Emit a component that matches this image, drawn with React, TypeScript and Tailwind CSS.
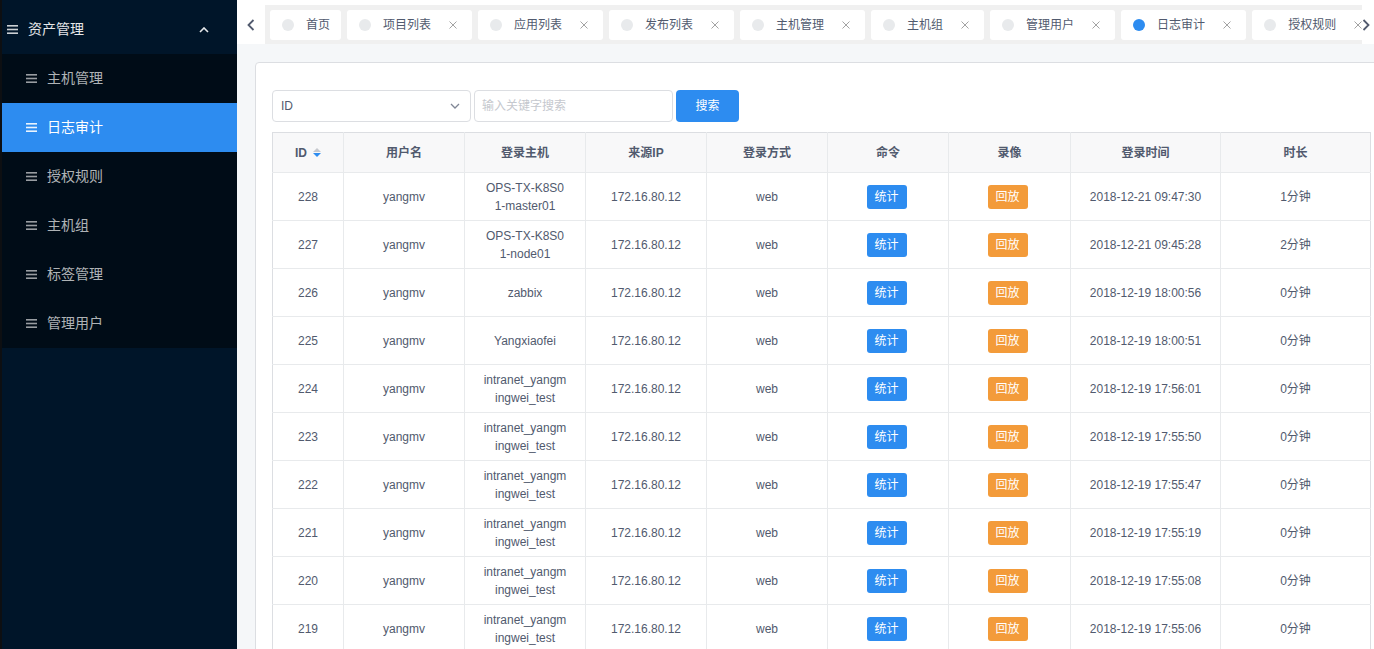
import React from 'react';

const font = { fontFamily: '"Liberation Sans", "Noto Sans CJK SC", sans-serif' };

const menuItems = ['主机管理', '日志审计', '授权规则', '主机组', '标签管理', '管理用户'];

const tabs = [
  { name: '首页', closable: false },
  { name: '项目列表', closable: true },
  { name: '应用列表', closable: true },
  { name: '发布列表', closable: true },
  { name: '主机管理', closable: true },
  { name: '主机组', closable: true },
  { name: '管理用户', closable: true },
  { name: '日志审计', closable: true, active: true },
  { name: '授权规则', closable: true },
];

const rows = [
  { id: 228, host: ['OPS-TX-K8S0', '1-master01'], time: '2018-12-21 09:47:30', dur: '1分钟' },
  { id: 227, host: ['OPS-TX-K8S0', '1-node01'], time: '2018-12-21 09:45:28', dur: '2分钟' },
  { id: 226, host: ['zabbix'], time: '2018-12-19 18:00:56', dur: '0分钟' },
  { id: 225, host: ['Yangxiaofei'], time: '2018-12-19 18:00:51', dur: '0分钟' },
  { id: 224, host: ['intranet_yangm', 'ingwei_test'], time: '2018-12-19 17:56:01', dur: '0分钟' },
  { id: 223, host: ['intranet_yangm', 'ingwei_test'], time: '2018-12-19 17:55:50', dur: '0分钟' },
  { id: 222, host: ['intranet_yangm', 'ingwei_test'], time: '2018-12-19 17:55:47', dur: '0分钟' },
  { id: 221, host: ['intranet_yangm', 'ingwei_test'], time: '2018-12-19 17:55:19', dur: '0分钟' },
  { id: 220, host: ['intranet_yangm', 'ingwei_test'], time: '2018-12-19 17:55:08', dur: '0分钟' },
  { id: 219, host: ['intranet_yangm', 'ingwei_test'], time: '2018-12-19 17:55:06', dur: '0分钟' },
];

const headers = ['用户名', '登录主机', '来源IP', '登录方式', '命令', '录像', '登录时间', '时长'];
const colWidths = [71, 121, 121, 121, 121, 121, 122, 150, 150];

function MenuIcon({ className }: { className?: string }) {
  return (
    <svg width="11" height="9" viewBox="0 0 11 9" className={className} fill="currentColor">
      <rect x="0" y="0" width="11" height="1.6" />
      <rect x="0" y="3.7" width="11" height="1.6" />
      <rect x="0" y="7.4" width="11" height="1.6" />
    </svg>
  );
}

function Sidebar() {
  return (
    <aside className="w-[237px] shrink-0 h-full bg-[#001529] border-l-2 border-[#0d0f12] flex flex-col">
      <div className="h-[54px] flex items-center pt-[5px] pl-[5px] pr-[28px] text-white/90 text-[14px]">
        <MenuIcon className="text-white/80" />
        <span className="ml-[10px]">资产管理</span>
        <svg width="10" height="6" viewBox="0 0 10 6" className="ml-auto text-white/90" fill="none" stroke="currentColor" strokeWidth="1.6">
          <path d="M1 5l4-4 4 4" />
        </svg>
      </div>
      <div className="bg-[#000c17]">
        {menuItems.map((m) => {
          const active = m === '日志审计';
          return (
            <div
              key={m}
              className={`h-[49px] flex items-center pl-[24px] text-[14px] ${active ? 'bg-[#2d8cf0] text-white' : 'text-white/70'}`}
            >
              <MenuIcon className={active ? 'text-white/90' : 'text-white/60'} />
              <span className="ml-[10px]">{m}</span>
            </div>
          );
        })}
      </div>
    </aside>
  );
}

function TabsNav() {
  return (
    <div className="h-[44px] bg-white pt-[5px] shrink-0">
      <div className="h-[39px] bg-[#f0f0f0] flex items-stretch">
        <div className="w-[28px] bg-white flex items-center justify-center text-[#515a6e] shrink-0">
          <svg width="8" height="12" viewBox="0 0 8 12" fill="none" stroke="currentColor" strokeWidth="1.8">
            <path d="M6.5 1L1.5 6l5 5" />
          </svg>
        </div>
        <div className="flex-1 overflow-hidden flex items-center gap-[6px] pl-[5px]">
          {tabs.map((t) => (
            <div
              key={t.name}
              className={`h-[30px] bg-white rounded-[3px] flex items-center pl-[12px] shrink-0 text-[12px] text-[#515a6e] ${t.closable ? 'pr-[15px]' : 'pr-[11px]'}`}
            >
              <span className={`w-[12px] h-[12px] rounded-full ${t.active ? 'bg-[#2d8cf0]' : 'bg-[#e8eaec]'}`} />
              <span className="ml-[12px]">{t.name}</span>
              {t.closable && (
                <svg width="8" height="8" viewBox="0 0 8 8" className="ml-[18px] text-[#999]" stroke="currentColor" strokeWidth="0.9">
                  <path d="M0.5 0.5l7 7M7.5 0.5l-7 7" />
                </svg>
              )}
            </div>
          ))}
        </div>
        <div className="w-[12px] bg-white flex items-center justify-start text-[#515a6e] shrink-0">
          <svg width="8" height="12" viewBox="0 0 8 12" fill="none" stroke="currentColor" strokeWidth="1.8">
            <path d="M1.5 1l5 5-5 5" />
          </svg>
        </div>
      </div>
    </div>
  );
}

function SortIcon() {
  return (
    <span className="inline-flex flex-col ml-[6px] gap-[1px]">
      <svg width="8" height="4" viewBox="0 0 8 4"><path d="M0 4L4 0l4 4z" fill="#c5c8ce" /></svg>
      <svg width="8" height="4" viewBox="0 0 8 4"><path d="M0 0h8L4 4z" fill="#2d8cf0" /></svg>
    </span>
  );
}

function LogTable() {
  return (
    <table className="table-fixed border-collapse border border-[#dcdee2] text-[12px] text-[#515a6e] mt-[10px]" style={{ width: 1098 }}>
      <colgroup>
        {colWidths.map((w, i) => (
          <col key={i} style={{ width: w }} />
        ))}
      </colgroup>
      <thead>
        <tr className="h-[40px] bg-[#f8f8f9]">
          <th className="border-b border-r border-[#e8eaec] font-bold">
            <span className="inline-flex items-center">ID<SortIcon /></span>
          </th>
          {headers.map((h, i) => (
            <th key={h} className={`border-b border-[#e8eaec] font-bold ${i < headers.length - 1 ? 'border-r' : ''}`}>
              {h}
            </th>
          ))}
        </tr>
      </thead>
      <tbody>
        {rows.map((r) => (
          <tr key={r.id} className="h-[48px]">
            <td className="border-b border-r border-[#e8eaec] text-center">{r.id}</td>
            <td className="border-b border-r border-[#e8eaec] text-center">yangmv</td>
            <td className="border-b border-r border-[#e8eaec] text-center leading-[18px]">
              {r.host.map((l) => (
                <div key={l}>{l}</div>
              ))}
            </td>
            <td className="border-b border-r border-[#e8eaec] text-center">172.16.80.12</td>
            <td className="border-b border-r border-[#e8eaec] text-center">web</td>
            <td className="border-b border-r border-[#e8eaec] text-center pr-[3px]">
              <span className="inline-flex items-center justify-center w-[40px] h-[24px] rounded-[3px] bg-[#2d8cf0] text-white text-[12px]">统计</span>
            </td>
            <td className="border-b border-r border-[#e8eaec] text-center pr-[4px]">
              <span className="inline-flex items-center justify-center w-[40px] h-[24px] rounded-[3px] bg-[#f39b3a] text-white text-[12px]">回放</span>
            </td>
            <td className="border-b border-r border-[#e8eaec] text-center">{r.time}</td>
            <td className="border-b border-[#e8eaec] text-center">{r.dur}</td>
          </tr>
        ))}
      </tbody>
    </table>
  );
}

export default function App() {
  return (
    <div className="w-[1374px] h-[649px] overflow-hidden flex" style={font}>
      <Sidebar />
      <main className="flex-1 min-w-0 flex flex-col bg-[#f5f7f9] overflow-hidden">
        <TabsNav />
        <div className="pl-[18px] pt-[18px]">
          <div className="w-[1134px] bg-white border border-[#dcdee2] rounded-[4px] px-[16px] pt-[27px] pb-[16px]">
            <div className="flex items-center gap-[3px]">
              <div className="w-[199px] h-[32px] border border-[#dcdee2] rounded-[4px] flex items-center pl-[8px] pr-[10px] text-[12px] text-[#515a6e]">
                <span>ID</span>
                <svg width="10" height="6" viewBox="0 0 10 6" className="ml-auto text-[#808695]" fill="none" stroke="currentColor" strokeWidth="1.3">
                  <path d="M1 1l4 4 4-4" />
                </svg>
              </div>
              <div className="w-[199px] h-[32px] border border-[#dcdee2] rounded-[4px] flex items-center px-[7px] text-[12px] text-[#c5c8ce]">
                输入关键字搜索
              </div>
              <div className="w-[63px] h-[32px] rounded-[4px] bg-[#2d8cf0] text-white text-[12px] flex items-center justify-center">
                搜索
              </div>
            </div>
            <LogTable />
          </div>
        </div>
      </main>
    </div>
  );
}
